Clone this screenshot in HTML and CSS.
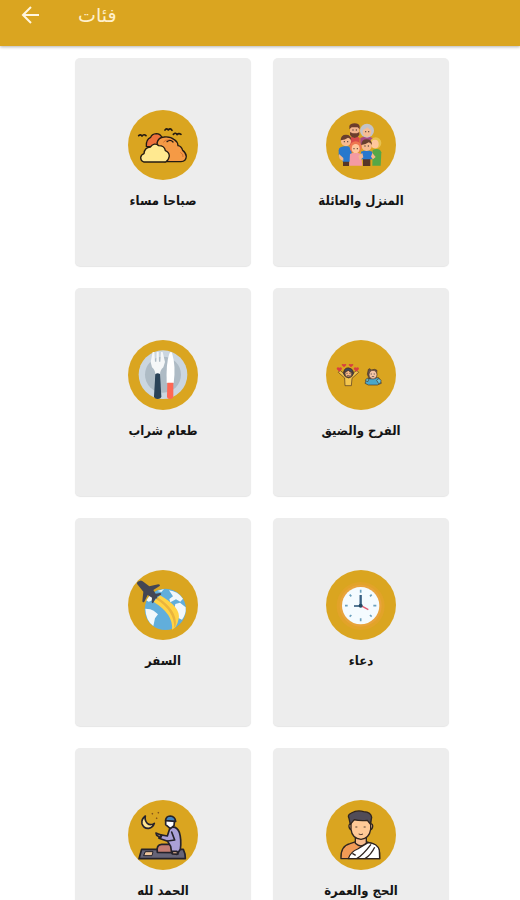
FILE: index.html
```html
<!DOCTYPE html>
<html lang="ar" dir="rtl">
<head>
<meta charset="utf-8">
<meta name="viewport" content="width=device-width, initial-scale=1">
<title>فئات</title>
<link rel="stylesheet" href="styles.css">
</head>
<body>
<header class="app-bar">
  <button class="back" type="button" aria-label="رجوع">
    <svg viewBox="0 0 24 24" aria-hidden="true"><path d="M21 12H5M13 4L5 12l8 8"/></svg>
  </button>
  <h1 class="title">فئات</h1>
</header>
<main class="categories">
  <a class="card" href="#home">
    <svg class="icon" viewBox="63 28 210 210" aria-hidden="true">
      <circle class="disc" cx="168" cy="133" r="105"/>
      <path fill="#d94a4a" d="M134 112q16-12 30 0v24h-30z"/>
      <path fill="#a94b82" d="M166 112q22-12 40 2v20h-40z"/>
      <rect x="135" y="72" width="28" height="38" rx="12" fill="#f2b48d"/>
      <path fill="#6d3e2c" d="M133 86V76q3-8 16-8t15 9v9l-6-6h-18zM135 94l8 4h13l7-4v9q-5 9-14 9t-14-9z"/>
      <circle cx="186" cy="90" r="21" fill="#c3c3c8"/>
      <ellipse cx="186" cy="94" rx="13" ry="15" fill="#f6bd94"/>
      <path fill="#c3c3c8" d="M172 88q3-13 15-13 12 1 13 13-8-2-13-8-6 7-15 8z"/>
      <path fill="#563627" d="M114 174h18v22h-18zM174 174h22v22h-22z"/>
      <path fill="#2878cc" d="M101 149q0-12 22-13 18 1 18 13l-5 34h-22l-13-20z"/>
      <path fill="#f3b78d" d="M102 160l13 12v9q-16-5-13-21z"/>
      <circle cx="123" cy="122" r="15" fill="#f7bc91"/>
      <path fill="#69402e" d="M107 119q0-17 16-17t16 17q-5-7-10-8-8 6-22 8z"/>
      <path fill="#f49aa3" d="M135 160q16-8 33 0l4 35h-39z"/>
      <circle cx="152" cy="140" r="18" fill="#ef7650"/>
      <ellipse cx="152" cy="144" rx="12" ry="14" fill="#ffc79c"/>
      <path fill="#55a747" d="M203 148q20-8 26 7l-2 40h-25z"/>
      <circle cx="212" cy="127" r="17" fill="#e8c24e"/>
      <ellipse cx="210" cy="130" rx="11" ry="13" fill="#ffc79c"/>
      <path fill="#2878cc" d="M168 153q17-9 34 0v23h-33z"/>
      <path fill="#f3b78d" d="M160 166l12-9 3 13-11 9zM202 157l10 12-8 7-6-8z"/>
      <circle cx="185" cy="136" r="15" fill="#f7bc91"/>
      <path fill="#69402e" d="M169 133q0-17 16-17t16 17q-5-7-10-8-8 6-22 8z"/>
      <g fill="#513e39"><circle cx="118" cy="123" r="2"/><circle cx="128" cy="123" r="2"/><circle cx="147" cy="144" r="2"/><circle cx="157" cy="144" r="2"/><circle cx="180" cy="136" r="2"/><circle cx="190" cy="136" r="2"/><circle cx="144" cy="88" r="2"/><circle cx="154" cy="88" r="2"/><circle cx="182" cy="93" r="2"/><circle cx="191" cy="93" r="2"/></g>
    </svg>
    <span class="label">المنزل والعائلة</span>
  </a>
  <a class="card" href="#morning">
    <svg class="icon" viewBox="57 28 210 210" aria-hidden="true">
      <circle class="disc" cx="162" cy="133" r="105"/>
      <g stroke="#241b13" stroke-width="4" stroke-linejoin="round" stroke-linecap="round">
        <path fill="#ee713b" d="M112 137q-2-20 13-27 3-10 17-11 12 0 17 12l-5 22-24 6z"/>
        <path fill="#f59a45" d="M144 127q4-17 21-18 20-2 31 8 10 6 11 18 10 1 14 14 10 7 11 18-1 16-16 16h-50z"/>
        <path fill="#ffe990" d="M104 184q-9-4-9-13 1-9 10-12 1-18 19-20 12-15 25-4 18 0 20 15 11 4 12 16-2 13-11 18z"/>
        <path fill="none" stroke-width="5" d="M89 105q6-5 10 1 6-7 12-1M168 88q6-7 10 0 6-7 11 1M193 101q7-7 11 1 5-6 12-1"/>
        <path fill="none" d="M174 123q10-8 18 1"/>
      </g>
      <path fill="none" stroke="#bd5727" stroke-width="2" d="M163 125q5-9 18-7M214 155q10 5 8 14"/>
    </svg>
    <span class="label">صباحا مساء</span>
  </a>
  <a class="card" href="#feelings">
    <svg class="icon" viewBox="63 30 210 210" aria-hidden="true">
      <circle class="disc" cx="168" cy="135" r="105"/>
      <g stroke="#4b3524" stroke-width="2" stroke-linejoin="round">
        <path fill="#f4c64f" d="M119 144l-19-17 5-6 18 15h14l18-15 6 6-20 18-2 22h-19z"/>
        <path fill="#41434e" d="M115 130q2-15 15-16 14 1 16 16-4 13-15 14-13-1-16-14z"/>
        <circle cx="130" cy="131" r="10" fill="#f8ba88"/>
        <path fill="#414758" d="M117 126q2-14 14-12 11 1 13 13-10 1-14-6-5 5-13 5z"/>
        <path fill="#4aa7ca" d="M180 160q1-13 14-16l27-1 8 17-12 5h-27z"/>
        <path fill="#66504c" d="M190 118l5-2 4 4 10-2 7 3-3 23-20 3-6-14z"/>
        <ellipse cx="204" cy="134" rx="12" ry="13" fill="#f5c5a6"/>
        <path fill="#67c4de" d="M181 151q7-12 9-2t-9 2zM215 151q7-10 13 0 2 10-7 10z"/>
      </g>
      <path fill="#d83f40" d="M103 125l-8-8q0-7 8-4 8-3 8 4zM154 125l-8-8q1-7 8-4 8-3 8 4zM117 112l-7-7q0-5 7-2 7-3 7 2zM138 112l-7-7q0-5 7-2 7-3 7 2z"/>
      <path fill="none" stroke="#33313a" stroke-width="2" d="M124 130h4m5 0h4M126 137h8M197 132h4m5 0h4M200 141q4-4 8 0"/>
    </svg>
    <span class="label">الفرح والضيق</span>
  </a>
  <a class="card" href="#food">
    <svg class="icon" viewBox="57 30 210 210" aria-hidden="true">
      <circle class="disc" cx="162" cy="135" r="105"/>
      <circle cx="162" cy="134" r="73" fill="#cbd6e0"/>
      <circle cx="162" cy="134" r="54" fill="#aebbc5"/>
      <path fill="#f5f7f8" d="M131 66h5l2 29h4l1-29h6l1 29h4l2-29h5l7 30-5 16q-10 8-10 22h-14q0-14-10-22l-4-16z"/>
      <path fill="#fff" d="M173 159q-2-61 8-88 4-9 8-2 12 38 5 90z"/>
      <path fill="#2a4257" d="M139 132q7-5 14 0l4 67q-1 8-11 8t-11-8z"/>
      <path fill="#ff6855" d="M175 158h18v41q-1 8-10 8t-9-8z"/>
    </svg>
    <span class="label">طعام شراب</span>
  </a>
  <a class="card" href="#dua">
    <svg class="icon" viewBox="63 30 210 210" aria-hidden="true">
      <circle class="disc" cx="168" cy="135" r="105"/>
      <circle cx="167" cy="138" r="72" fill="#e2a329"/>
      <circle cx="167" cy="137" r="63" fill="#e8a33c"/>
      <circle cx="167" cy="137" r="56" fill="#f4fbff"/>
      <path fill="none" stroke="#6ba0bd" stroke-width="5" d="M167 89v9M167 175v9M120 137h8M205 137h9M134 104l5 5M195 165l5 5M134 170l5-5M195 109l5-5"/>
      <path fill="none" stroke="#385f82" stroke-width="7" d="M167 137v-32"/>
      <path fill="none" stroke="#385f82" stroke-width="5" d="M167 138h-20"/>
      <path stroke="#e45b70" stroke-width="4" d="M168 137l22 12"/>
      <circle cx="167" cy="137" r="6" fill="#244963"/>
    </svg>
    <span class="label">دعاء</span>
  </a>
  <a class="card" href="#travel">
    <svg class="icon" viewBox="57 30 210 210" aria-hidden="true">
      <circle class="disc" cx="162" cy="135" r="105"/>
      <circle cx="169" cy="148" r="62" fill="#61aedb"/>
      <path fill="#f2f8fb" d="M109 146l15 2 10 4 13 11-9 12-5 23q-23-17-24-52zM180 91q26 3 42 25l-8 9-13-7-17 9-3-10 11-8zM199 132l14-4 17 14q2 20-11 37l-11-5-2-16-10-10z"/>
      <path fill="#f3f8fa" d="M112 121l12-17 10 15-15 6zM145 93l20-6-8 9z"/>
      <path fill="#ffd345" d="M133 125l20-19q63 36 56 70-5 27-20 33 5-47-56-84z"/>
      <path fill="#eab43d" d="M141 117l5-5q60 40 54 84l-4 8q0-52-55-87z"/>
      <path fill="#444654" d="M92 63q3-3 9 1l20 15 27-6q7 0 4 5l-19 12 7 11 13-2q6 1 3 5l-12 6 1 5-6 1-6 12q-4 4-5-3l1-12-13-8-10 20q-5 5-6-2l3-28-18-22q-4-7 7-10z"/>
    </svg>
    <span class="label">السفر</span>
  </a>
  <a class="card" href="#hajj">
    <svg class="icon" viewBox="63 32 210 210" aria-hidden="true">
      <circle class="disc" cx="168" cy="137" r="105"/>
      <g stroke="#30251f" stroke-width="4" stroke-linejoin="round">
        <path fill="#f19a56" d="M108 208q-2-38 27-45l18-6h30l22 7q22 8 19 44z"/>
        <path fill="#f8bc8e" d="M151 144h33v18q-16 16-33 0z"/>
        <path fill="#f8bc8e" d="M139 104q-8-2-7 8 1 9 9 9M196 104q8-2 7 8-1 9-9 9"/>
        <path fill="#ffc996" d="M138 91h59v29q-4 27-29 30-27-3-30-30z"/>
        <path fill="#514c58" d="M136 105l-4-18q-6-10 7-16 18-10 37-4 22 1 24 17l-4 20-9-11q-23 2-39-2z"/>
        <path fill="#fff" d="M130 208q7-21 28-29l31-19q29 2 34 23l1 25z"/>
        <path fill="none" d="M155 208q18-10 43-43M180 208q18-11 29-34M142 192l10 6"/>
      </g>
      <path fill="none" stroke="#59402f" stroke-width="3" d="M151 113h6m19 0h6M161 134q7 4 13 0"/>
    </svg>
    <span class="label">الحج والعمرة</span>
  </a>
  <a class="card" href="#praise">
    <svg class="icon" viewBox="57 32 210 210" aria-hidden="true">
      <circle class="disc" cx="162" cy="137" r="105"/>
      <g stroke="#25222b" stroke-width="5" stroke-linejoin="round" stroke-linecap="round">
        <path fill="#666477" d="M98 180h125q7 14 6 28H90z"/>
        <path fill="#efc59b" stroke-width="3" d="M110 187h22l-3 12h-24z"/>
        <path fill="#ffe591" d="M109 80q-13 10-10 23 5 15 20 14 13-2 17-15-12 8-21 0-9-9-6-22z"/>
        <path fill="#c47d72" d="M145 189q-4-23 13-24h30l14 25z"/>
        <path fill="#aaa0d8" d="M183 115q20-7 28 14 7 23 3 51l-10 15-16-4-3-20-9-15-26-9 2-11 23 4z"/>
        <path fill="none" d="M188 128l9 24-21 3"/>
        <path fill="#f6c39b" d="M155 145l-12-7-2-7 12 5 5 3z"/>
        <path fill="#fff" d="M170 91h27l-2 18-11 9-14-12z"/>
        <path fill="#4383be" d="M170 94q0-13 14-14 14 1 16 16z"/>
        <path fill="#f6c39b" d="M190 186h14l3 8h-17z"/>
      </g>
      <path fill="#80501c" d="M130 70l3 3-3 3-3-3zM148 67l3 3-3 3-3-3zM143 84l3 3-3 3-3-3z"/>
    </svg>
    <span class="label">الحمد لله</span>
  </a>
</main>
</body>
</html>
```
FILE: styles.css
```css
* {
  box-sizing: border-box;
}

body {
  display: flex;
  flex-direction: column;
  height: 100vh;
  margin: 0;
  overflow: hidden;
  background: #fff;
  color: #151515;
  font-family: "DejaVu Sans", "Noto Sans", sans-serif;
}

.app-bar {
  display: flex;
  flex: none;
  direction: ltr;
  align-items: center;
  gap: 36px;
  padding: 0 18px 16px;
  background: #daa520;
  box-shadow: 0 1px 3px rgba(0, 0, 0, 0.3);
}

.back {
  display: flex;
  width: 24px;
  height: 30px;
  padding: 0;
  align-items: center;
  border: 0;
  background: none;
  color: #fff6e0;
}

.back svg {
  width: 24px;
  fill: none;
  stroke: currentColor;
  stroke-width: 2;
}

.title {
  margin: 0;
  color: #fff0cc;
  font-size: 19px;
  font-weight: 400;
  line-height: 24px;
}

.categories {
  display: grid;
  flex: 1;
  grid-template-columns: 1fr 1fr;
  grid-auto-rows: 208px;
  gap: 22px;
  padding: 12px 71px 24px 75px;
  overflow-y: auto;
  scrollbar-width: none;
}

.card {
  display: flex;
  flex-direction: column;
  align-items: center;
  gap: 11px;
  padding-top: 52px;
  border-radius: 5px;
  background: #ededed;
  box-shadow: 0 1px 1px rgba(0, 0, 0, 0.1);
  color: inherit;
  text-decoration: none;
}

.icon {
  flex: none;
  width: 70px;
  height: 70px;
}

.disc {
  fill: #daa520;
}

.label {
  font-family: "DejaVu Sans Condensed", "DejaVu Sans", sans-serif;
  font-size: 13px;
  font-weight: 700;
  line-height: 20px;
}
```
